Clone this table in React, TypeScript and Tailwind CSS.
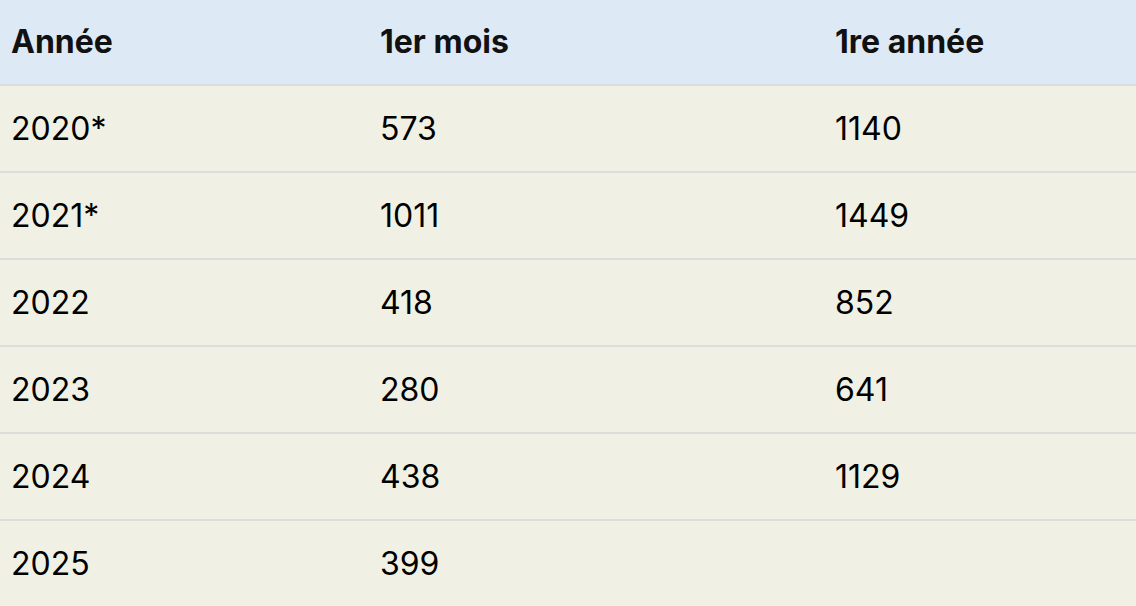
const rows = [
  ["2020*", "573", "1140"],
  ["2021*", "1011", "1449"],
  ["2022", "418", "852"],
  ["2023", "280", "641"],
  ["2024", "438", "1129"],
  ["2025", "399", ""],
];

export default function App() {
  return (
    <main className="min-h-screen bg-[#f0f1e4] font-['Inter',sans-serif] text-[32px] text-black">
      <table className="w-full border-collapse">
        <thead>
          <tr className="h-[85px] bg-[#ddeaf6] border-b-2 border-[#dcdcdc]">
            <th className="w-[369px] pl-[11px] text-left font-bold text-[#111]">Année</th>
            <th className="w-[455px] pl-[11px] text-left font-bold text-[#111]">1er mois</th>
            <th className="pl-[11px] text-left font-bold text-[#111]">1re année</th>
          </tr>
        </thead>
        <tbody>
          {rows.map((row, i) => (
            <tr key={i} className="h-[87px] border-b-2 border-[#dcdcdc] last:border-b-0">
              <td className="pl-[11px]">{row[0]}</td>
              <td className="pl-[11px]">{row[1]}</td>
              <td className="pl-[11px]">{row[2]}</td>
            </tr>
          ))}
        </tbody>
      </table>
    </main>
  );
}
